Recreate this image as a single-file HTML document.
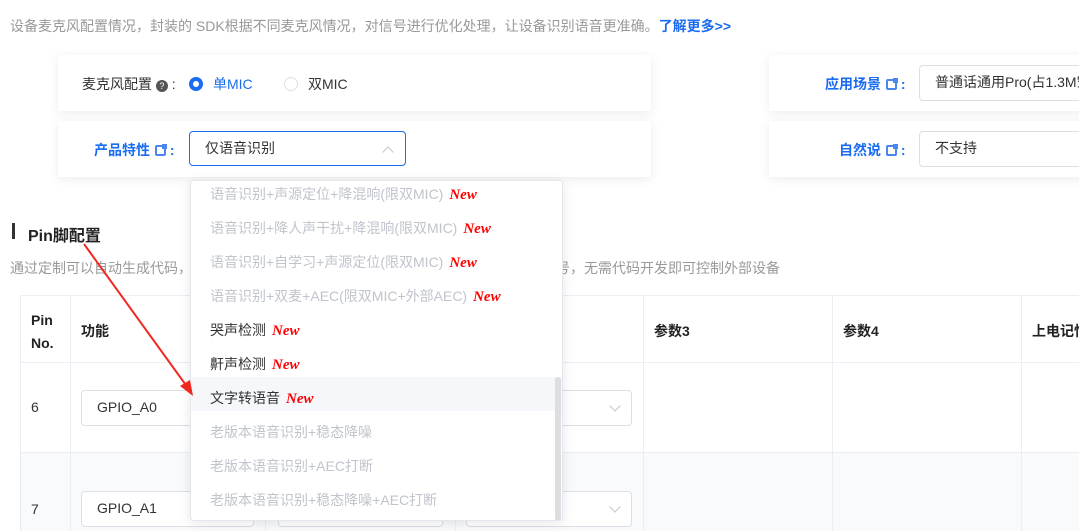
<!DOCTYPE html>
<html><head><meta charset="utf-8"><style>
*{margin:0;padding:0;box-sizing:border-box}
body{width:1079px;height:531px;overflow:hidden;background:#fff;font-family:"Liberation Sans","Noto Sans CJK SC",sans-serif;font-size:14px;color:#333;position:relative}
.a{position:absolute}
.card{position:absolute;background:#fff;box-shadow:0 2px 10px rgba(0,0,0,.08)}
.blue{color:#1a6cf0}
.lbl{font-weight:bold;color:#1a6cf0}
.ext{display:inline-block;width:11px;height:11px;border:2px solid #4a86f0;border-radius:2px;vertical-align:-1px;margin-left:5px;position:relative}
.ext:after{content:"";position:absolute;right:-3px;top:-3px;width:5px;height:5px;background:#4a86f0}
.inp{position:absolute;border:1px solid #dcdfe6;border-radius:4px;background:#fff;padding-left:15px;line-height:32px;color:#333}
.th{position:absolute;font-weight:bold;color:#222}
.vl{position:absolute;width:1px;background:#ebeef5}
.hl{position:absolute;height:1px;background:#ebeef5}
.chev{position:absolute;width:8px;height:8px;border-right:1px solid #c0c4cc;border-bottom:1px solid #c0c4cc;transform:rotate(45deg)}
.it{position:absolute;left:19px;font-size:14px;color:#c0c4cc;white-space:nowrap}
.it.d{color:#333}
.new{font-family:"Liberation Serif",serif;font-style:italic;font-weight:bold;color:#f00;margin-left:6px;font-size:15px}
</style></head><body>
<div class="a" style="left:10px;top:16px;font-size:14px;color:#999;white-space:nowrap">设备麦克风配置情况，封装的 SDK根据不同麦克风情况，对信号进行优化处理，让设备识别语音更准确。<b class="blue">了解更多&gt;&gt;</b></div>

<div class="card" style="left:58px;top:55px;width:593px;height:56px"></div>
<div class="a" style="left:82px;top:74px;color:#333">麦克风配置 <span style="display:inline-block;width:12px;height:12px;border-radius:50%;background:#555;color:#fff;font-size:9px;text-align:center;line-height:12px;vertical-align:0">?</span> :</div>
<div class="a" style="left:189px;top:77px;width:14px;height:14px;border-radius:50%;background:#1a6cf0"><div class="a" style="left:4px;top:4px;width:6px;height:6px;border-radius:50%;background:#fff"></div></div>
<div class="a blue" style="left:213px;top:74px">单MIC</div>
<div class="a" style="left:284px;top:77px;width:14px;height:14px;border-radius:50%;border:1px solid #dcdfe6"></div>
<div class="a" style="left:308px;top:74px">双MIC</div>

<div class="card" style="left:58px;top:121px;width:593px;height:56px"></div>
<div class="a lbl" style="left:94px;top:140px">产品特性<span class="ext"></span> :</div>
<div class="inp" style="left:189px;top:131px;width:217px;height:35px;border-color:#1a6cf0">仅语音识别</div>
<div class="chev" style="left:384px;top:148px;transform:rotate(225deg)"></div>

<div class="card" style="left:769px;top:55px;width:320px;height:56px"></div>
<div class="a lbl" style="left:825px;top:74px">应用场景<span class="ext"></span> :</div>
<div class="inp" style="left:919px;top:65px;width:200px;height:36px;white-space:nowrap">普通话通用Pro(占1.3M空间)</div>
<div class="card" style="left:769px;top:121px;width:320px;height:56px"></div>
<div class="a lbl" style="left:839px;top:140px">自然说<span class="ext"></span> :</div>
<div class="inp" style="left:919px;top:131px;width:200px;height:36px">不支持</div>

<div class="a" style="left:12px;top:223px;width:3px;height:16px;background:#333"></div>
<div class="a" style="left:28px;top:222px;font-size:16px;font-weight:bold;color:#222">Pin脚配置</div>
<div class="a" style="left:10px;top:258px;font-size:14px;color:#999;white-space:nowrap">通过定制可以自动生成代码，把开发板引脚配置为各种外部设备需要的控制信号、检测信号，无需代码开发即可控制外部设备</div>

<!-- table -->
<div class="a" style="left:20px;top:362px;width:1059px;height:90px;background:#fff"></div>
<div class="a" style="left:20px;top:452px;width:1059px;height:79px;background:#f9fafb"></div>
<div class="hl" style="left:20px;top:295px;width:1059px"></div>
<div class="hl" style="left:20px;top:362px;width:1059px"></div>
<div class="hl" style="left:20px;top:452px;width:1059px"></div>
<div class="vl" style="left:20px;top:295px;height:236px"></div>
<div class="vl" style="left:70px;top:295px;height:236px"></div>
<div class="vl" style="left:265px;top:295px;height:236px"></div>
<div class="vl" style="left:455px;top:295px;height:236px"></div>
<div class="vl" style="left:643px;top:295px;height:236px"></div>
<div class="vl" style="left:832px;top:295px;height:236px"></div>
<div class="vl" style="left:1021px;top:295px;height:236px"></div>
<div class="th" style="left:31px;top:309px;line-height:23px">Pin<br>No.</div>
<div class="th" style="left:81px;top:321px">功能</div>
<div class="th" style="left:654px;top:321px">参数3</div>
<div class="th" style="left:843px;top:321px">参数4</div>
<div class="th" style="left:1032px;top:321px;white-space:nowrap">上电记忆</div>
<div class="a" style="left:31px;top:399px">6</div>
<div class="a" style="left:31px;top:501px">7</div>
<div class="inp" style="left:81px;top:390px;width:173px;height:36px">GPIO_A0</div>
<div class="inp" style="left:81px;top:491px;width:173px;height:36px">GPIO_A1</div>
<div class="inp" style="left:278px;top:390px;width:165px;height:36px"></div>
<div class="inp" style="left:278px;top:491px;width:165px;height:36px"></div>
<div class="inp" style="left:466px;top:390px;width:166px;height:36px"></div>
<div class="inp" style="left:466px;top:491px;width:166px;height:36px"></div>
<div class="chev" style="left:611px;top:402px"></div>
<div class="chev" style="left:611px;top:503px"></div>

<!-- dropdown -->
<div class="a" style="left:190px;top:180px;width:373px;height:341px;background:#fff;border:1px solid #e4e7ed;border-radius:4px;box-shadow:0 2px 12px rgba(0,0,0,.1);overflow:hidden">
<div class="a" style="left:0;top:196px;width:372px;height:34px;background:#f5f7fa"></div>
<div class="it" style="top:3px">语音识别+声源定位+降混响(限双MIC)<span class="new">New</span></div>
<div class="it" style="top:37px">语音识别+降人声干扰+降混响(限双MIC)<span class="new">New</span></div>
<div class="it" style="top:71px">语音识别+自学习+声源定位(限双MIC)<span class="new">New</span></div>
<div class="it" style="top:105px">语音识别+双麦+AEC(限双MIC+外部AEC)<span class="new">New</span></div>
<div class="it d" style="top:139px">哭声检测<span class="new">New</span></div>
<div class="it d" style="top:173px">鼾声检测<span class="new">New</span></div>
<div class="it d" style="top:207px">文字转语音<span class="new">New</span></div>
<div class="it" style="top:241px">老版本语音识别+稳态降噪</div>
<div class="it" style="top:275px">老版本语音识别+AEC打断</div>
<div class="it" style="top:309px">老版本语音识别+稳态降噪+AEC打断</div>
<div class="a" style="left:364px;top:196px;width:6px;height:144px;border-radius:3px;background:#dddee1"></div>
</div>

<!-- arrow -->
<svg class="a" style="left:0;top:0" width="1079" height="531"><line x1="84" y1="244" x2="188" y2="388" stroke="#f0271e" stroke-width="2"/><polygon points="193,396 180,386 190,380" fill="#f0271e"/></svg>
</body></html>
